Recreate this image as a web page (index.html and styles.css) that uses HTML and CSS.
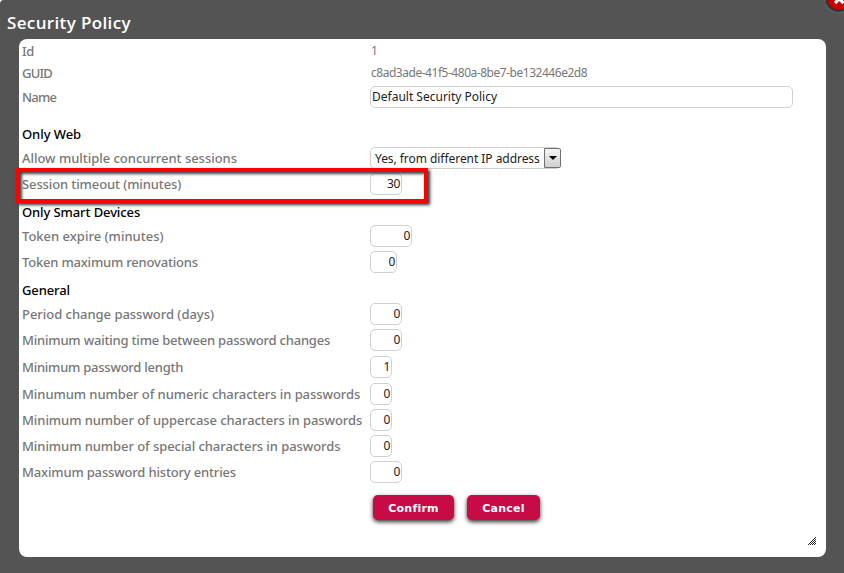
FILE: index.html
```
<!DOCTYPE html>
<html lang="en">
<head>
<meta charset="utf-8">
<title>Security Policy</title>
<link rel="stylesheet" href="styles.css">
</head>
<body>
<div class="window">
  <h1 class="title">Security Policy</h1>
  <svg class="close" width="18" height="15" viewBox="0 0 18 15"><circle cx="13" cy="-2" r="15" fill="#686868"/><circle cx="13" cy="-2" r="14" fill="#333"/><circle cx="13" cy="-2" r="11.7" fill="#c60000"/><path d="M9 3 18-6M17.500 3 8.500-6" stroke="#fff" stroke-width="3.2"/></svg>
  <form class="panel">
    <div class="row text"><label class="s3">Id</label><span class="plain">1</span></div>
    <div class="row text"><label class="s8">GUID</label><span class="plain guid">c8ad3ade-41f5-480a-8be7-be132446e2d8</span></div>
    <div class="row name"><label class="s8">Name</label><span class="field wide">Default Security Policy</span></div>
    <h2 class="web">Only Web</h2>
    <div class="row select"><label class="s03">Allow multiple concurrent sessions</label><span class="field combo">Yes, from different IP address<span class="arrow"></span></span></div>
    <div class="row"><label class="s1">Session timeout (minutes)</label><span class="field num w32">30</span><div class="highlight"></div></div>
    <h2 class="s1">Only Smart Devices</h2>
    <div class="row"><label>Token expire (minutes)</label><span class="field num w42">0</span></div>
    <div class="row"><label class="s2">Token maximum renovations</label><span class="field num w27">0</span></div>
    <h2 class="s1">General</h2>
    <div class="row"><label class="s03">Period change password (days)</label><span class="field num w32">0</span></div>
    <div class="row"><label class="s2">Minimum waiting time between password changes</label><span class="field num w32">0</span></div>
    <div class="row tall"><label class="s25">Minimum password length</label><span class="field num w22">1</span></div>
    <div class="row tall"><label class="s08">Minumum number of numeric characters in passwords</label><span class="field num w22">0</span></div>
    <div class="row"><label class="s08">Minimum number of uppercase characters in paswords</label><span class="field num w22">0</span></div>
    <div class="row"><label class="s08">Minimum number of special characters in paswords</label><span class="field num w22">0</span></div>
    <div class="row"><label class="s17">Maximum password history entries</label><span class="field num w32">0</span></div>
    <div class="buttons"><button type="button" class="confirm">Confirm</button><button type="button" class="cancel">Cancel</button></div>
    <svg class="grip" width="8" height="8" viewBox="0 0 8 8" shape-rendering="crispEdges"><path d="M7 .5h1M6 1.500h1M5 2.500h1M7 2.500h1M4 3.500h1M6 3.500h1M3 4.500h1M5 4.500h1M7 4.500h1M2 5.500h1M4 5.500h1M6 5.500h1M1 6.500h1M3 6.500h1M5 6.500h1M7 6.500h1M0 7.500h1M2 7.500h1M4 7.500h1M6 7.500h1" stroke="#222"/></svg>
  </form>
</div>
</body>
</html>
```
FILE: styles.css
```
* { box-sizing: border-box; }
body { margin: 0; background: #fff; font-family: "Noto Sans", sans-serif; }
.window { position: relative; height: 573px; padding: 39px 18px 16px 19px; background: #545454; border-radius: 4px 0 0 0; overflow: hidden; }
.title { margin: -28px 0 4px -12px; height: 24px; color: #fff; font: 600 17px/24px "Open Sans", sans-serif; letter-spacing: .36px; }
.close { position: absolute; right: 0; top: 0; }
.panel { position: relative; height: 518px; padding: 1px 3px 0; background: #fff; border-radius: 8px; }
.row { position: relative; display: grid; grid-template-columns: 348px 1fr; align-items: center; height: 26px; }
.row.text { height: 22px; }
.row.select { height: 24px; margin-bottom: 1px; }
.row.tall { height: 27px; }
label, h2 { font-size: 13px; font-weight: 500; line-height: 20px; white-space: nowrap; }
label { color: #777; }
h2 { height: 26px; margin: 0; padding-top: 5px; color: #000; }
h2.web { height: 24px; margin-top: 12px; padding-top: 2px; letter-spacing: -.07px; }
.s03 { letter-spacing: -.03px; }
.s08 { letter-spacing: -.07px; }
.s1 { letter-spacing: -.11px; }
.s17 { letter-spacing: -.17px; }
.s2 { letter-spacing: -.2px; }
.s25 { letter-spacing: -.25px; }
.s3 { letter-spacing: -.3px; }
.s8 { letter-spacing: -.8px; }
.plain { padding-left: 1px; color: #777; font-size: 12px; line-height: 20px; }
.guid { letter-spacing: -.47px; }
.field { display: flex; align-items: center; height: 22px; padding: 0 1px 1px; border: 1px solid #d0d0d0; border-radius: 5px; background: #fff; color: #222; font-size: 12px; line-height: 19px; }
.wide { width: 423px; }
.combo { width: 191px; height: 22px; padding: 0 0 0 4px; justify-content: space-between; white-space: nowrap; letter-spacing: -.05px; }
.arrow { width: 17px; height: 20px; margin-right: -1px; flex: none; display: grid; place-items: center; border: 1px solid #707070; border-radius: 0 2px 2px 0; background: linear-gradient(#f4f4f4, #d0d0d0); }
.arrow::before { content: ""; border: 4px solid transparent; border-top-color: #000; border-bottom: 0; }
.num { justify-content: flex-end; letter-spacing: -.4px; }
.w22 { width: 22px; }
.w27 { width: 27px; }
.w32 { width: 32px; }
.w42 { width: 42px; }
.highlight { position: absolute; left: -6px; top: -3px; width: 412px; height: 35px; border: 4px solid #f00; box-shadow: 2px 2px 3px #333, inset 2px 2px 3px #444; }
.buttons { display: flex; gap: 13px; padding: 10px 0 0 351px; }
button { height: 25px; padding: 1px 0 0; border: 0; border-radius: 5px; background: #c60b46; color: #fff; font: bold 11px "DejaVu Sans", sans-serif; letter-spacing: .25px; box-shadow: 0 2px 4px #333; }
.confirm { width: 81px; }
.cancel { width: 73px; }
.grip { position: absolute; right: 10px; bottom: 12px; }
```
